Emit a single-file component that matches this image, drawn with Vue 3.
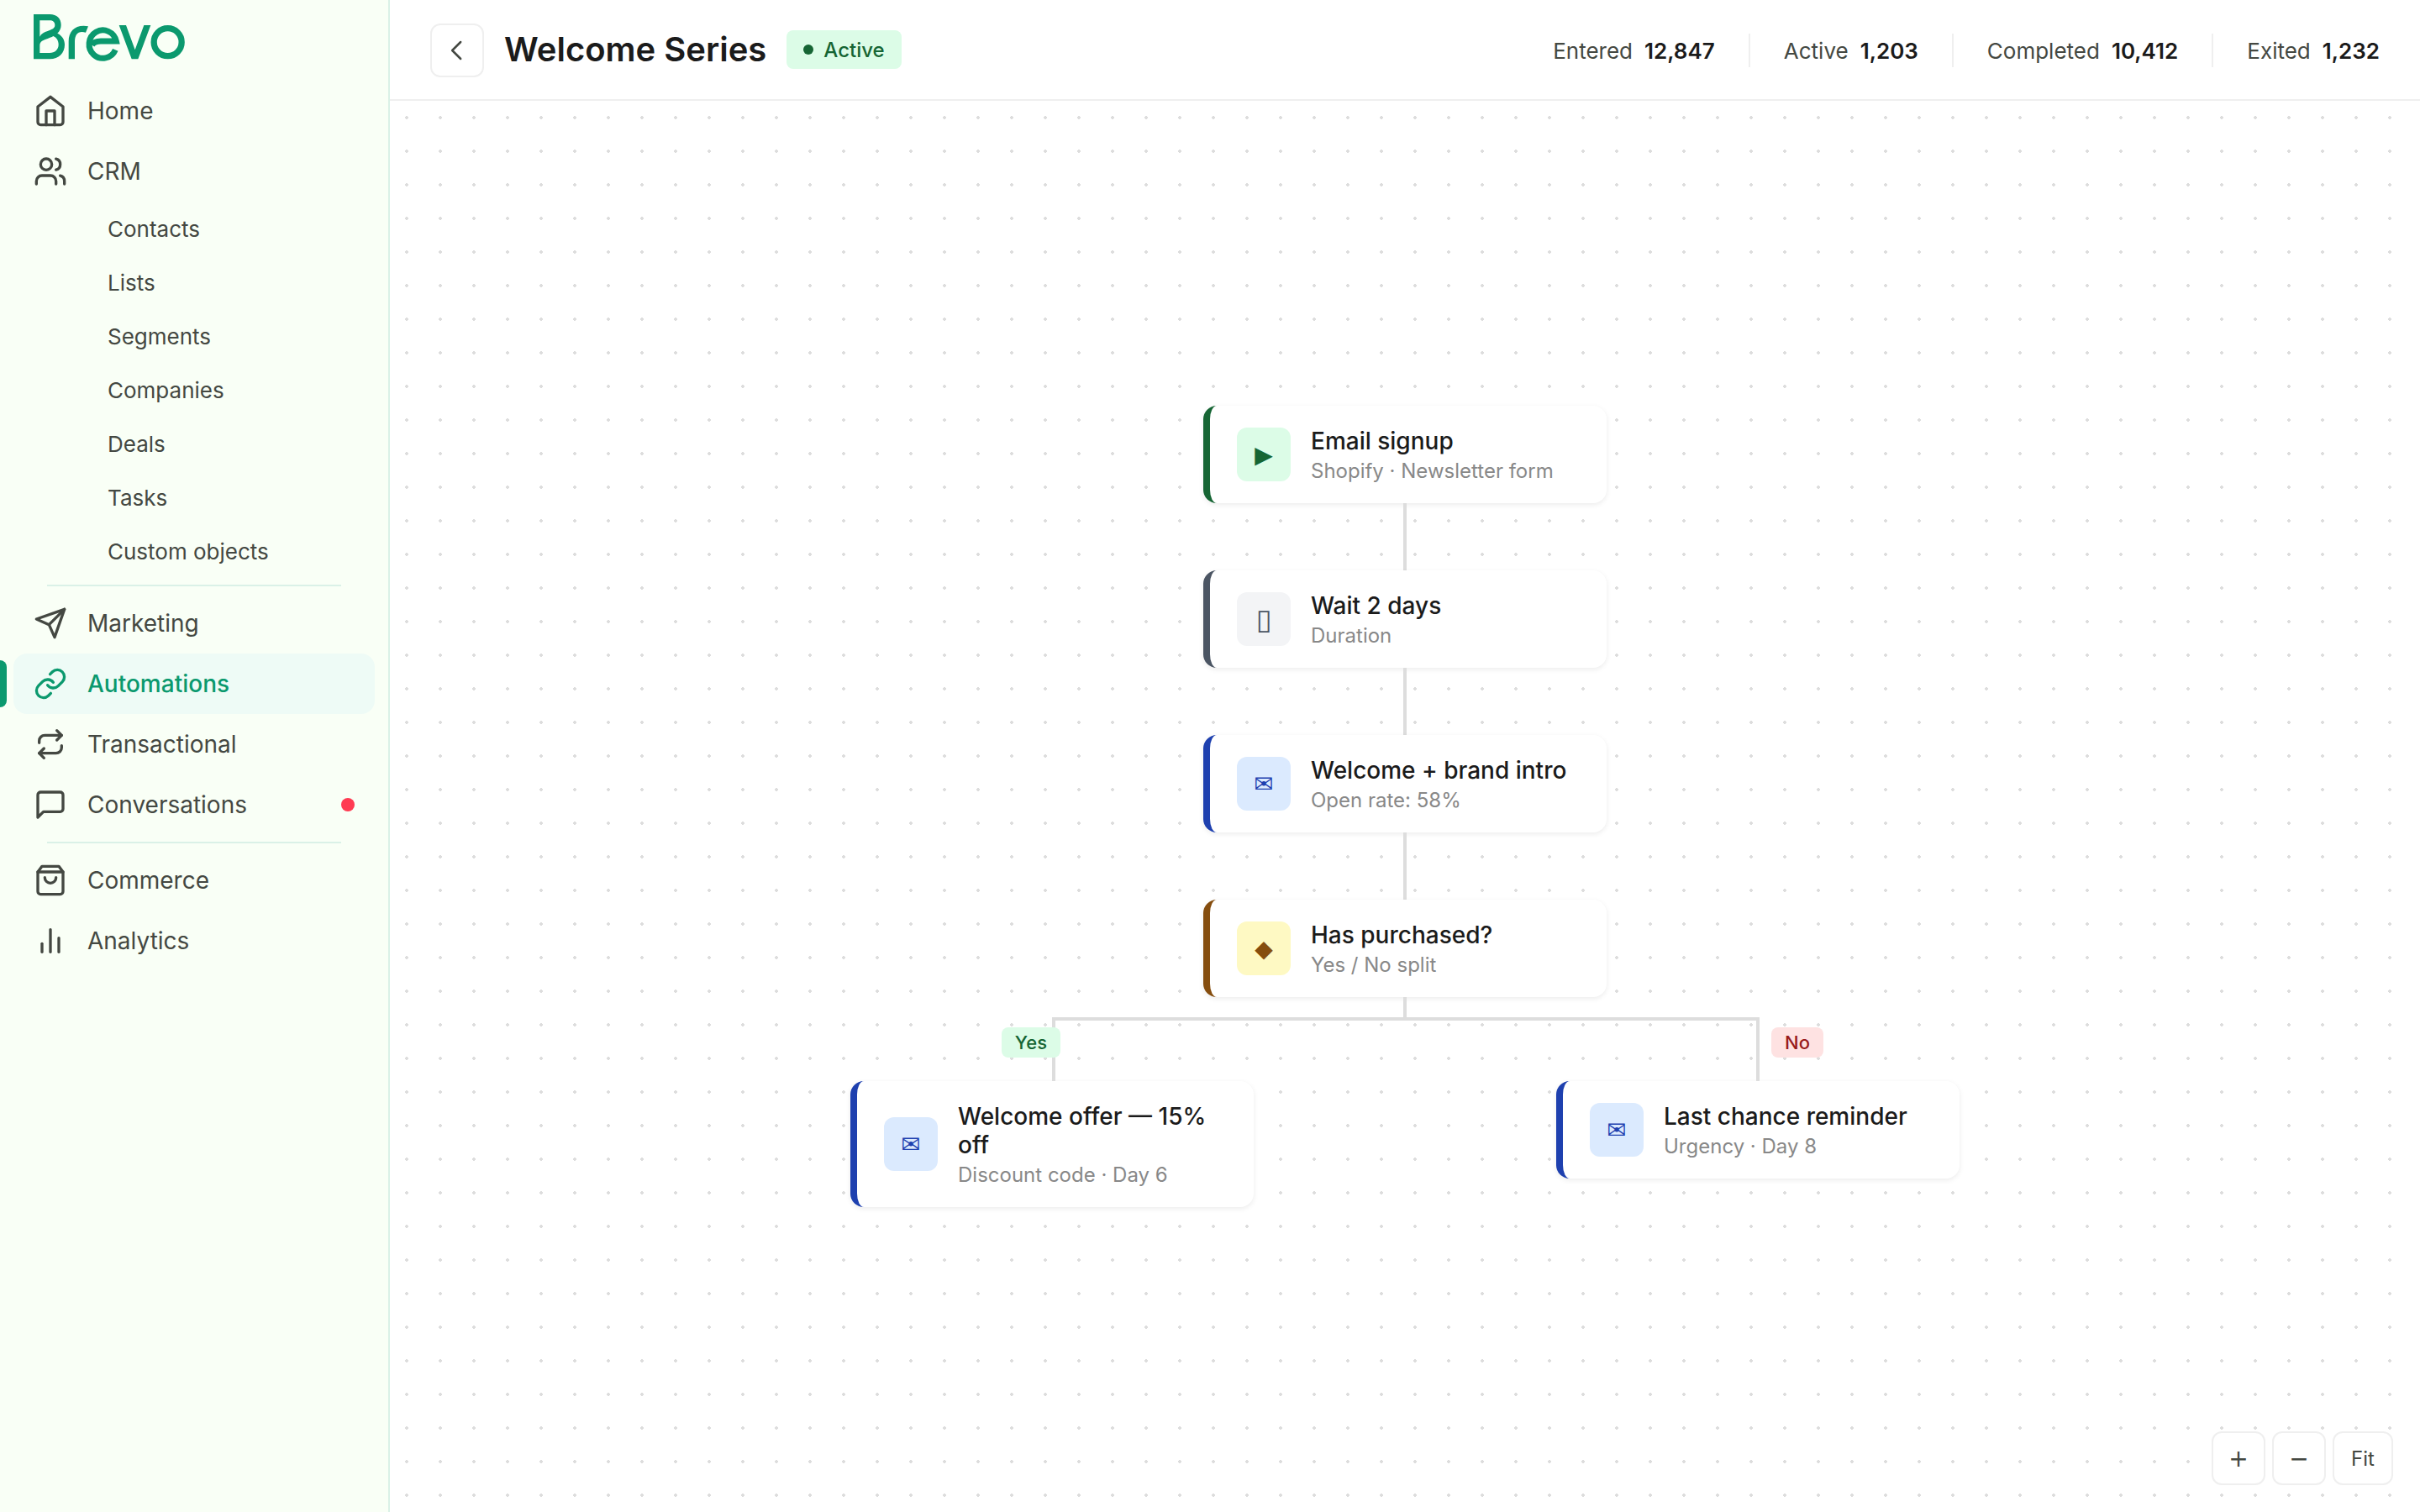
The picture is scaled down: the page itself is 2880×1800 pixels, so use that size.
<script setup>
const icons = {
  home: ['M3 9l9-7 9 7v11a2 2 0 0 1-2 2H5a2 2 0 0 1-2-2z', 'M9 22V12h6v10'],
  users: [
    'M16 21v-2a4 4 0 0 0-4-4H6a4 4 0 0 0-4 4v2',
    'M5 7a4 4 0 1 0 8 0a4 4 0 1 0-8 0',
    'M22 21v-2a4 4 0 0 0-3-3.87',
    'M16 3.13a4 4 0 0 1 0 7.75',
  ],
  send: ['M22 2 11 13', 'M22 2 15 22 11 13 2 9z'],
  link: [
    'M10 13a5 5 0 0 0 7.54.54l3-3a5 5 0 0 0-7.07-7.07l-1.72 1.71',
    'M14 11a5 5 0 0 0-7.54-.54l-3 3a5 5 0 0 0 7.07 7.07l1.71-1.71',
  ],
  repeat: [
    'M16.6 2.2 20 5.6 16.6 9',
    'M4 11V9.6a4 4 0 0 1 4-4h12',
    'M7.4 21.8 4 18.4 7.4 15',
    'M20 13v1.4a4 4 0 0 1-4 4H4',
  ],
  message: ['M21 15a2 2 0 0 1-2 2H7l-4 4V5a2 2 0 0 1 2-2h14a2 2 0 0 1 2 2z'],
  bag: ['M6 2 3 6v14a2 2 0 0 0 2 2h14a2 2 0 0 0 2-2V6l-3-4z', 'M3 6h18', 'M16 10a4 4 0 0 1-8 0'],
  chart: ['M18 20V10', 'M12 20V4', 'M6 20v-6'],
}

const navGroups = [
  [
    { label: 'Home', icon: 'home' },
    {
      label: 'CRM',
      icon: 'users',
      children: ['Contacts', 'Lists', 'Segments', 'Companies', 'Deals', 'Tasks', 'Custom objects'],
    },
  ],
  [
    { label: 'Marketing', icon: 'send' },
    { label: 'Automations', icon: 'link', active: true },
    { label: 'Transactional', icon: 'repeat' },
    { label: 'Conversations', icon: 'message', unread: true },
  ],
  [
    { label: 'Commerce', icon: 'bag' },
    { label: 'Analytics', icon: 'chart' },
  ],
]

const stats = [
  { label: 'Entered', value: '12,847' },
  { label: 'Active', value: '1,203' },
  { label: 'Completed', value: '10,412' },
  { label: 'Exited', value: '1,232' },
]

const steps = [
  { kind: 'trigger', glyph: '▶', title: 'Email signup', detail: 'Shopify · Newsletter form' },
  { kind: 'wait', glyph: '▯', title: 'Wait 2 days', detail: 'Duration' },
  { kind: 'email', glyph: '✉', title: 'Welcome + brand intro', detail: 'Open rate: 58%' },
  { kind: 'split', glyph: '◆', title: 'Has purchased?', detail: 'Yes / No split' },
]

const branches = [
  { answer: 'Yes', glyph: '✉', title: 'Welcome offer — 15% off', detail: 'Discount code · Day 6' },
  { answer: 'No', glyph: '✉', title: 'Last chance reminder', detail: 'Urgency · Day 8' },
]
</script>

<template>
  <div class="app">
    <aside class="sidebar">
      <a class="logo" href="#" aria-label="Brevo">
        <svg viewBox="12 15 540 160" fill="currentColor">
          <path
            fill-rule="evenodd"
            d="M12 15H70C95 15 110 30 110 53C110 64 106 74 97 83C114 91 123 106 123 123C123 154 102 175 70 175H12ZM34 37V95C39 84 50 79 62 75C78 69 88 65 88 54C88 43 81 37 69 37ZM34 153H69C88 153 101 141 101 123C101 109 94 98 82 93C76 97 69 99 62 102C44 108 34 113 34 126Z"
          />
          <path d="M137 175V112C137 74 163 50 207 58L198 80C172 72 159 86 159 112V175Z" />
          <path
            fill="none"
            stroke="currentColor"
            stroke-width="21"
            d="M304 142A49 50 0 1 1 307 111H252C236 111 226 115 220 125"
          />
          <path d="M317 54H342L374 142L406 54H430L385 175H362Z" />
          <ellipse cx="491" cy="114.5" rx="49.5" ry="49.5" fill="none" stroke="currentColor" stroke-width="22" />
        </svg>
      </a>
      <nav class="nav">
        <ul v-for="(group, g) in navGroups" :key="g" class="nav-group">
          <li v-for="item in group" :key="item.label">
            <a class="nav-item" :class="{ active: item.active }" href="#">
              <svg class="nav-icon" viewBox="0 0 24 24">
                <path v-for="d in icons[item.icon]" :key="d" :d="d" />
              </svg>
              <span>{{ item.label }}</span>
              <span v-if="item.unread" class="unread"></span>
            </a>
            <ul v-if="item.children" class="nav-sub">
              <li v-for="child in item.children" :key="child">
                <a class="nav-child" href="#">{{ child }}</a>
              </li>
            </ul>
          </li>
        </ul>
      </nav>
    </aside>

    <main class="main">
      <header class="topbar">
        <button class="back" type="button" aria-label="Back">
          <svg viewBox="0 0 24 24"><path d="M14.5 18l-6-6 6-6" /></svg>
        </button>
        <h1>Welcome Series</h1>
        <span class="status">Active</span>
        <dl class="stats">
          <div v-for="s in stats" :key="s.label" class="stat">
            <dt>{{ s.label }}</dt>
            <dd>{{ s.value }}</dd>
          </div>
        </dl>
      </header>

      <section class="canvas">
        <div class="flow">
          <template v-for="(step, i) in steps" :key="step.title">
            <div v-if="i" class="connector"></div>
            <article class="node" :class="step.kind">
              <span class="node-icon">{{ step.glyph }}</span>
              <div class="node-text">
                <h2>{{ step.title }}</h2>
                <p>{{ step.detail }}</p>
              </div>
            </article>
          </template>
          <div class="connector short"></div>
          <div class="branches">
            <div v-for="b in branches" :key="b.answer" class="branch" :class="b.answer.toLowerCase()">
              <div class="elbow">
                <span class="answer">{{ b.answer }}</span>
              </div>
              <article class="node email">
                <span class="node-icon">{{ b.glyph }}</span>
                <div class="node-text">
                  <h2>{{ b.title }}</h2>
                  <p>{{ b.detail }}</p>
                </div>
              </article>
            </div>
          </div>
        </div>

        <div class="zoom">
          <button type="button" aria-label="Zoom in">+</button>
          <button type="button" aria-label="Zoom out">−</button>
          <button type="button" class="fit">Fit</button>
        </div>
      </section>
    </main>
  </div>
</template>

<style>
body {
  margin: 0;
}
</style>

<style scoped>
.app {
  --green: #0b996e;
  --ink: #1b1b1b;
  --ink-soft: #444842;
  --line: #efefef;
  --mint-line: #daf1e7;
  display: flex;
  min-height: 100vh;
  background: #fff;
  color: var(--ink);
  font-family: Inter, 'Liberation Sans', sans-serif;
  font-size: 28px;
}

.app *,
.app *::before {
  box-sizing: border-box;
}

h1,
h2,
p,
dl,
dd,
ul {
  margin: 0;
  padding: 0;
}

ul {
  list-style: none;
}

a {
  color: inherit;
  text-decoration: none;
}

/* Sidebar */
.sidebar {
  flex: none;
  width: 464px;
  padding: 16px;
  background: #f9fff6;
  border-right: 2px solid var(--mint-line);
  color: var(--ink-soft);
}

.logo {
  display: block;
  height: 80px;
  padding: 1px 24px;
  color: var(--green);
}

.logo svg {
  display: block;
  width: 180px;
  overflow: visible;
}

.nav-group + .nav-group::before {
  content: '';
  display: block;
  height: 2px;
  margin: 8px 40px;
  background: var(--mint-line);
}

.nav-item {
  position: relative;
  display: flex;
  align-items: center;
  gap: 24px;
  height: 72px;
  padding: 0 24px;
  border-radius: 16px;
}

.nav-item.active {
  background: #eefbf6;
  color: var(--green);
  font-weight: 500;
}

.nav-item.active::before {
  content: '';
  position: absolute;
  left: -16px;
  top: 8px;
  bottom: 8px;
  width: 8px;
  border-radius: 0 8px 8px 0;
  background: var(--green);
}

.nav-icon {
  width: 40px;
  height: 40px;
  fill: none;
  stroke: currentColor;
  stroke-width: 2;
  stroke-linecap: round;
  stroke-linejoin: round;
}

.unread {
  width: 16px;
  height: 16px;
  margin-left: auto;
  border-radius: 50%;
  background: #ff3b52;
}

.nav-child {
  display: flex;
  align-items: center;
  height: 64px;
  padding-left: 112px;
  font-size: 26px;
}

/* Top bar */
.main {
  flex: 1;
  display: flex;
  flex-direction: column;
  min-width: 0;
}

.topbar {
  display: flex;
  align-items: center;
  gap: 24px;
  height: 120px;
  padding: 2px 48px 0;
  border-bottom: 2px solid var(--line);
}

button {
  display: flex;
  align-items: center;
  justify-content: center;
  height: 64px;
  padding: 0;
  border: 2px solid var(--line);
  border-radius: 12px;
  background: #fff;
  color: var(--ink-soft);
  font-family: inherit;
}

.back {
  width: 64px;
}

.back svg {
  width: 40px;
  height: 40px;
  fill: none;
  stroke: currentColor;
  stroke-width: 1.5;
  stroke-linecap: round;
  stroke-linejoin: round;
}

h1 {
  font-size: 40px;
  line-height: 48px;
  font-weight: 600;
  padding-bottom: 2px;
}

.status {
  display: flex;
  align-items: center;
  gap: 12px;
  height: 46px;
  margin-bottom: 2px;
  padding: 0 20px;
  border-radius: 8px;
  background: #dcfce7;
  color: #166534;
  font-size: 24px;
  font-weight: 500;
}

.status::before {
  content: '';
  width: 12px;
  height: 12px;
  border-radius: 50%;
  background: currentColor;
}

.stats {
  display: flex;
  align-items: center;
  margin-left: auto;
  font-size: 26px;
}

.stat {
  display: flex;
  align-items: center;
  gap: 14px;
  height: 40px;
}

.stat + .stat {
  margin-left: 40px;
  padding-left: 40px;
  border-left: 2px solid var(--line);
}

dt {
  color: var(--ink-soft);
}

dd {
  font-weight: 600;
}

/* Canvas */
.canvas {
  position: relative;
  flex: 1;
  display: flex;
  align-items: center;
  justify-content: center;
  background-image: radial-gradient(circle, #ddd 2px, transparent 2px);
  background-size: 40px 40px;
}

.flow {
  display: flex;
  flex-direction: column;
  align-items: center;
}

.node {
  display: flex;
  align-items: center;
  gap: 24px;
  width: 480px;
  padding: 23px 32px;
  border-left: 8px solid var(--accent);
  border-radius: 16px;
  background: #fff;
  box-shadow: 0 2px 6px rgba(0, 0, 0, 0.08);
}

.node-icon {
  flex: none;
  display: flex;
  align-items: center;
  justify-content: center;
  width: 64px;
  height: 64px;
  border-radius: 12px;
  background: var(--tint);
  color: var(--accent);
  font-family: 'DejaVu Sans', sans-serif;
  font-size: 28px;
}

.wait .node-icon {
  font-size: 34px;
}

.trigger {
  --accent: #166534;
  --tint: #dcfce7;
}

.wait {
  --accent: #4b5563;
  --tint: #f3f4f6;
}

.email {
  --accent: #1e40af;
  --tint: #dbeafe;
}

.split {
  --accent: #854d0e;
  --tint: #fef9c3;
}

.node-text {
  display: flex;
  flex-direction: column;
  gap: 4px;
  padding-top: 2px;
}

h2 {
  font-size: 28px;
  line-height: 34px;
  font-weight: 500;
}

p {
  color: #888;
  font-size: 24px;
  line-height: 30px;
}

.connector {
  width: 4px;
  height: 80px;
  background: #ddd;
}

.connector.short {
  height: 24px;
}

.branches {
  display: flex;
  align-items: flex-start;
  gap: 360px;
}

.elbow {
  position: relative;
  height: 76px;
  border-top: 4px solid #ddd;
}

.yes .elbow {
  margin: 0 -180px 0 240px;
  border-left: 4px solid #ddd;
}

.no .elbow {
  margin: 0 238px 0 -180px;
  border-right: 4px solid #ddd;
}

.answer {
  position: absolute;
  top: 8px;
  padding: 0 16px;
  border-radius: 8px;
  font-size: 22px;
  line-height: 36px;
  font-weight: 500;
}

.yes .answer {
  right: calc(100% - 6px);
  background: #dcfce7;
  color: #166534;
}

.no .answer {
  left: calc(100% + 18px);
  background: #fee2e2;
  color: #991b1b;
}

.zoom {
  position: absolute;
  right: 32px;
  bottom: 32px;
  display: flex;
  gap: 8px;
}

.zoom button {
  min-width: 64px;
  font-family: 'DejaVu Sans', sans-serif;
  font-size: 28px;
}

.zoom .fit {
  min-width: 72px;
  font-family: inherit;
  font-size: 24px;
}
</style>
